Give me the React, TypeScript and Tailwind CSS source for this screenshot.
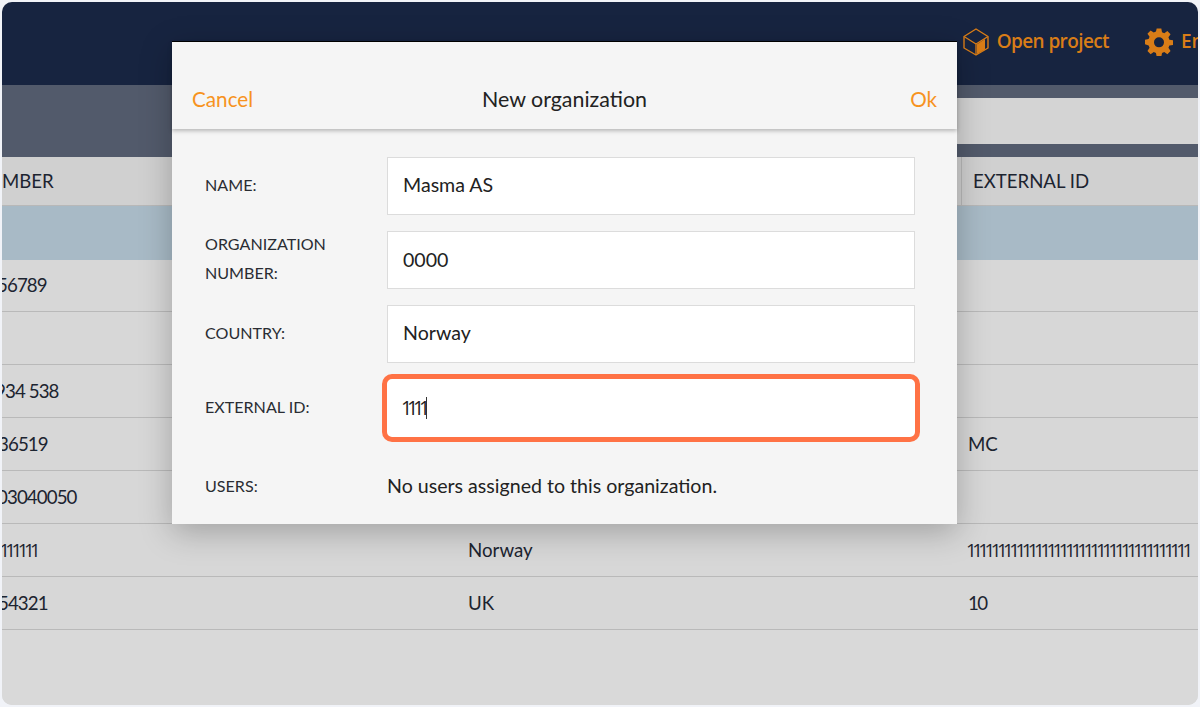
import React from "react";

const rows = [
  { num: "56789", numCls: "-ml-[5px] tracking-[-0.9px]", country: "", ext: "" },
  { num: "", numCls: "", country: "", ext: "" },
  { num: "934 538", numCls: "-ml-[7px] tracking-[-0.9px]", country: "", ext: "" },
  { num: "36519", numCls: "-ml-[4px] tracking-[-0.9px]", country: "", ext: "MC" },
  { num: "03040050", numCls: "-ml-[5px] tracking-[-0.9px]", country: "", ext: "" },
  { num: "1111111", numCls: "-ml-[9px] tracking-[-4.5px] font-['Open_Sans',sans-serif]", country: "Norway", ext: "" },
  { num: "654321", numCls: "-ml-[14px] tracking-[-0.9px]", country: "UK", ext: "" },
];
const heights = ["h-[52px]", "h-[53px]", "h-[53px]", "h-[53px]", "h-[53px]", "h-[53px]", "h-[53px]"];

function CubeIcon() {
  return (
    <svg width="26" height="28" viewBox="0 0 26 28" fill="none">
      <path d="M13 1 25 8.5v11.5L13 27 1 20V8.5z" stroke="#d97d17" strokeWidth="1.4" strokeLinejoin="round" />
      <path d="M1 8.5 13 16l12-7.5M13 16v11" stroke="#d97d17" strokeWidth="1.3" />
      <path d="M14 16.2 22 11v10.5L14 26z" fill="#d97d17" />
    </svg>
  );
}

function GearIcon() {
  return (
    <svg width="28" height="28" viewBox="0 0 24 24" fill="#d97d17">
      <path fillRule="evenodd" d="M10 0.5h4l.6 3.1 1.9.8 2.7-1.8 2.7 2.8-1.8 2.6.8 2 3.1.5v4l-3.1.6-.8 1.9 1.8 2.7-2.7 2.7-2.7-1.8-1.9.8-.6 3.2h-4l-.6-3.2-1.9-.8-2.7 1.8-2.7-2.7 1.8-2.7-.8-1.9L0 14v-4l3.1-.5.8-2-1.8-2.6 2.7-2.8 2.7 1.8 1.9-.8zM12 8a4.3 4.3 0 1 0 0 8.6 4.3 4.3 0 0 0 0-8.6z" />
    </svg>
  );
}

function Field({ label, value, focused, labelCls = "-mt-[3px]", valueCls = "pb-[2px]" }: { label: React.ReactNode; value: string; focused?: boolean; labelCls?: string; valueCls?: string }) {
  return (
    <div className="flex items-center h-[58px]">
      <div className={`w-[182px] text-[16.1px] leading-[29px] text-[#2a2d33] ${labelCls}`}>{label}</div>
      {focused ? (
        <div className="relative flex-1 h-[58px] bg-white flex items-center pl-[14px] text-[19.6px] text-[#222]">
          <span className="tracking-[-5.2px] -mt-[1px] font-['Open_Sans',sans-serif]">{value}</span>
          <span className="w-px h-[22px] bg-[#333] ml-px" />
          <div className="absolute -inset-[5px] rounded-[10px] border-[5px] border-[#ff7245]" />
        </div>
      ) : (
        <div className={`flex-1 h-[58px] bg-white border border-[#dcdcdc] flex items-center pl-[15px] text-[19.6px] text-[#222] ${valueCls}`}>{value}</div>
      )}
    </div>
  );
}

export default function App() {
  return (
    <div className="h-[707px] w-[1200px] bg-[#f1f3f8] p-[2px] font-['Lato','Open_Sans',sans-serif] overflow-hidden">
      <div className="relative h-[703px] rounded-[10px] overflow-hidden bg-[#d8d8d8] flex flex-col">
        <header className="h-[83px] shrink-0 bg-[#172440] flex items-center justify-end gap-9 pb-[4px] overflow-hidden">
          <div className="flex items-center gap-[8px] font-['Open_Sans',sans-serif] font-semibold text-[19px] text-[#d97d17] tracking-[-0.6px] ml-auto">
            <CubeIcon />
            <span>Open project</span>
          </div>
          <div className="flex items-center gap-[8px] font-['Open_Sans',sans-serif] font-semibold text-[19px] text-[#d97d17] w-[53px] shrink-0 overflow-hidden">
            <span className="shrink-0"><GearIcon /></span>
            <span className="shrink-0">En</span>
          </div>
        </header>
        <div className="h-[72px] shrink-0 bg-[#525a6b] flex flex-col justify-center">
          <div className="h-[46px] ml-[955px] bg-[#d4d4d4]" />
        </div>
        <div className="h-[49px] shrink-0 bg-[#d0d0d0] border-b border-[#b8b8b8] flex items-center text-[18.6px] text-[#1c2430]">
          <span className="w-[959px] shrink-0 pt-[2px]">MBER</span>
          <span className="h-full border-l border-[#b8b8b8] pl-[11px] pt-[2px] flex items-center">EXTERNAL ID</span>
        </div>
        <div className="h-[54px] shrink-0 bg-[#a8bac6]" />
        {rows.map((r, i) => (
          <div key={i} className={`${heights[i]} shrink-0 bg-[#d7d7d7] border-b border-[#b9b9b9] flex items-center text-[18.7px] text-[#1c2430] overflow-hidden`}>
            <div className="w-[466px] shrink-0 whitespace-nowrap"><div className={r.numCls}>{r.num}</div></div>
            <div className="w-[500px] shrink-0">{r.country}</div>
            {i === 5 ? (
              <div className="-ml-[2px] whitespace-nowrap tracking-[-4.5px] font-['Open_Sans',sans-serif]">111111111111111111111111111111111111</div>
            ) : i === 6 ? (
              <div className="whitespace-nowrap tracking-[-1.5px]">10</div>
            ) : (
              <div className="whitespace-nowrap">{r.ext}</div>
            )}
          </div>
        ))}
        <div className="flex-1 bg-[#d9d9d9]" />

        <div className="absolute left-[170px] top-[39px] w-[785px] h-[483px] bg-[#f5f5f5] border-t border-black shadow-[0_8px_30px_rgba(0,0,0,0.25)] flex flex-col">
          <div className="h-[87px] shrink-0 grid grid-cols-[1fr_auto_1fr] items-end px-5 pb-[16px] shadow-[0_2px_4px_rgba(0,0,0,0.25)] leading-[28px]">
            <span className="text-[#f7931e] text-[20.7px]">Cancel</span>
            <span className="text-[#222] text-[21.4px]">New organization</span>
            <span className="text-[#f7931e] text-[20.7px] text-right">Ok</span>
          </div>
          <div className="pt-[28px] pl-[33px] pr-[42px] flex flex-col gap-4">
            <Field label="NAME:" value="Masma AS" />
            <Field label={<>ORGANIZATION<br />NUMBER:</>} value="0000" labelCls="-mt-[4px]" valueCls="pb-[1px]" />
            <Field label="COUNTRY:" value="Norway" />
            <Field label="EXTERNAL ID:" value="1111" focused />
            <div className="flex items-center mt-[18px] h-[30px]">
              <div className="w-[182px] text-[16.1px] text-[#2a2d33] pt-[1px]">USERS:</div>
              <div className="text-[19.6px] text-[#222]">No users assigned to this organization.</div>
            </div>
          </div>
        </div>
      </div>
    </div>
  );
}
